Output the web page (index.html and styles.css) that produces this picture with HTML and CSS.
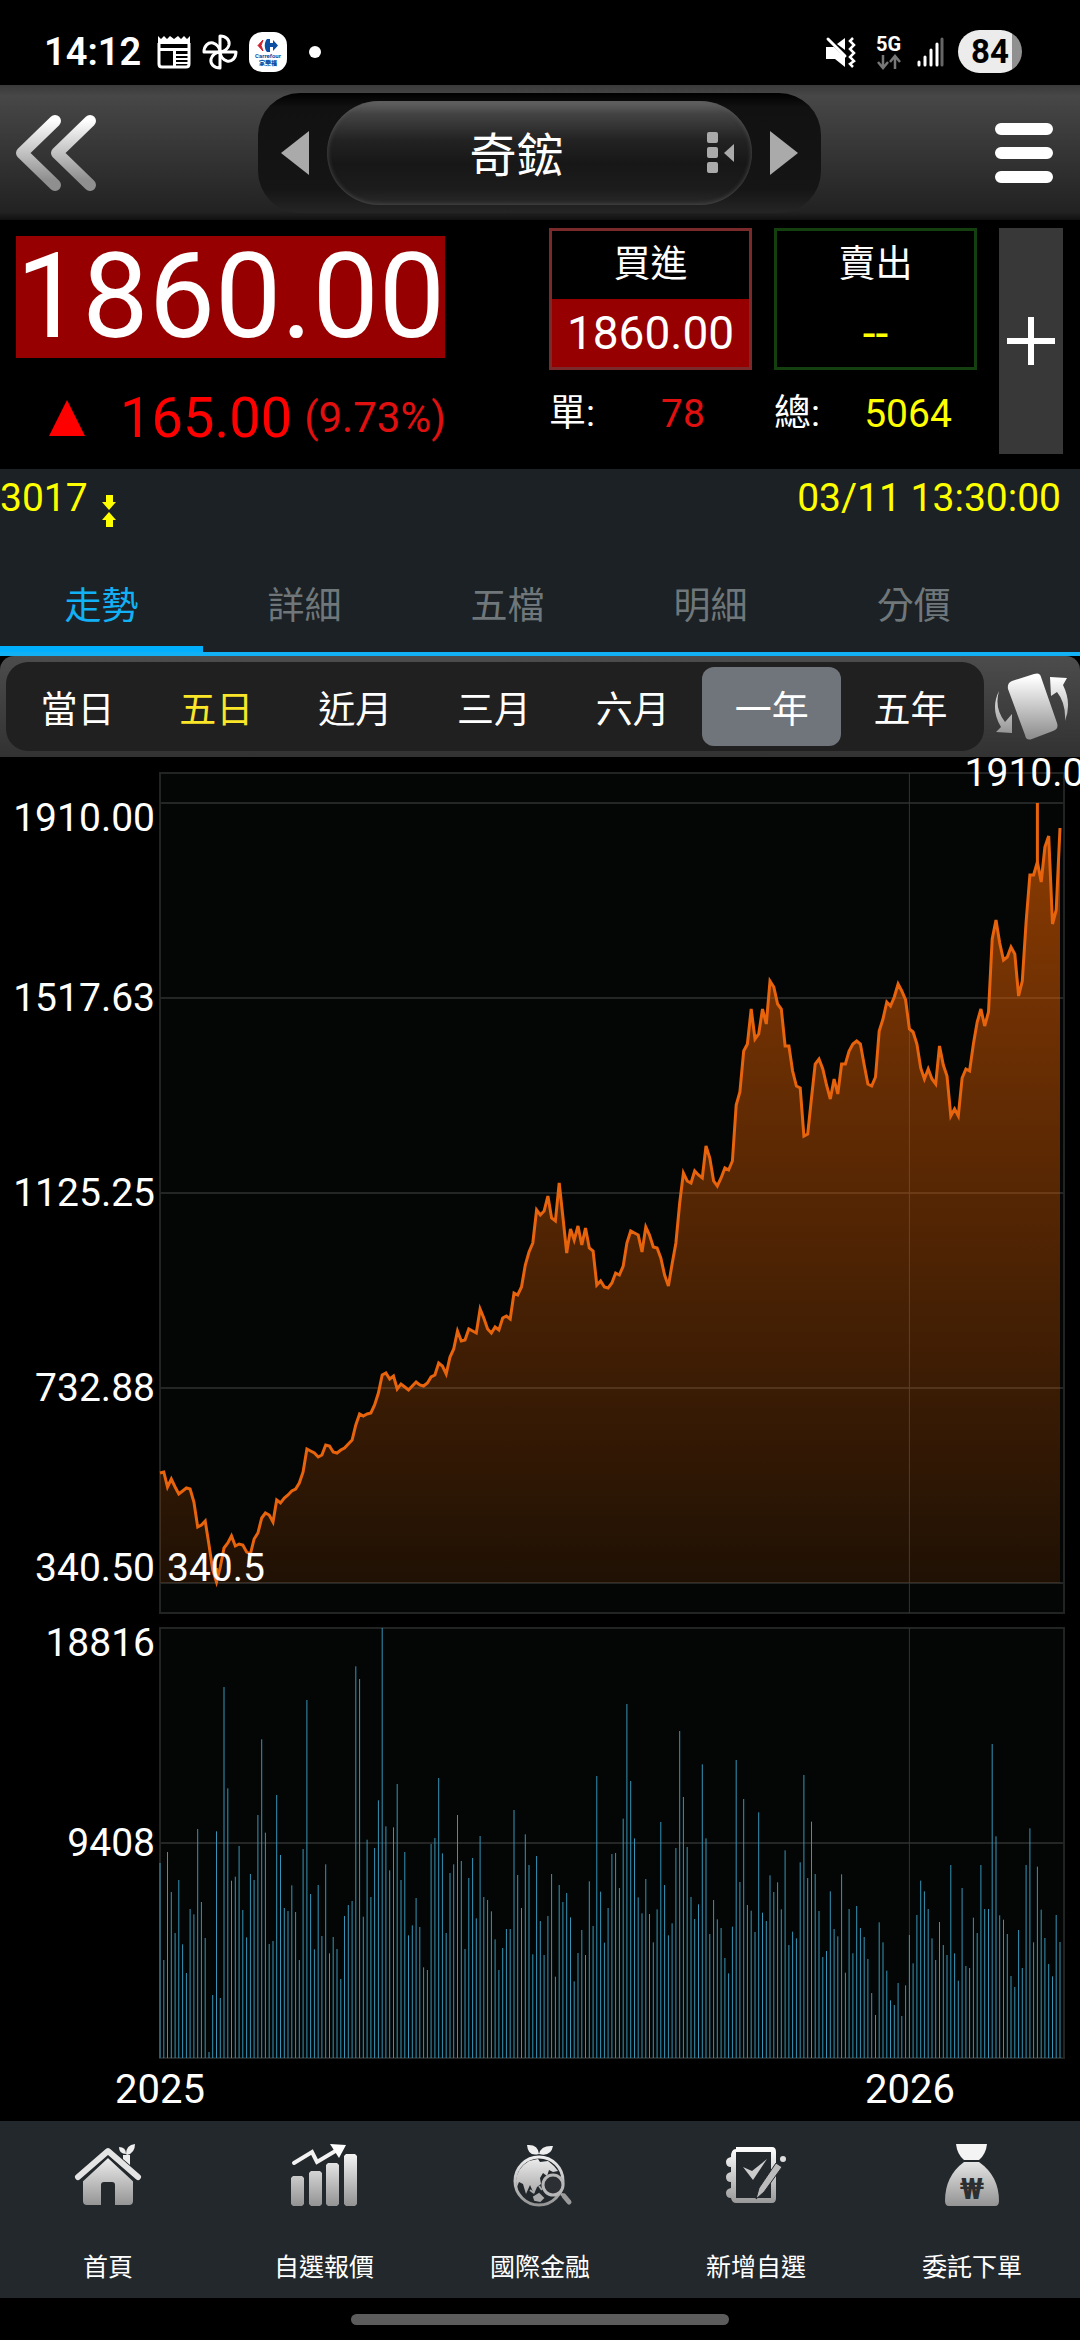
FILE: index.html
```html
<!DOCTYPE html>
<html lang="zh-Hant">
<head>
  <meta charset="UTF-8">
  <meta name="viewport" content="width=device-width, initial-scale=1.0">
  <title>奇鋐 3017</title>
  <link rel="stylesheet" href="styles.css">
</head>
<body>
  <div class="status-bar">
    <span class="clock">14:12</span>
    <svg class="status-icon" width="34" height="34" viewBox="0 0 34 34">
      <path d="M1 9V1l3 3 3-3 3 3 3-3 4 3 4-3 3 3 3-3 3 3 3-3v8z" fill="#fff"/>
      <path d="M2 8v21q0 3 3 3h24q3 0 3-3V8" fill="none" stroke="#fff" stroke-width="3"/>
      <path d="M1 13h32v3H1zM16 15h3v16h-3z" fill="#fff"/>
      <path d="M19 20h12M19 24h12M19 28h12" stroke="#fff" stroke-width="2"/>
    </svg>
    <svg class="status-icon" width="38" height="38" viewBox="0 0 38 38" fill="none" stroke="#fff" stroke-width="3" stroke-linejoin="round">
      <path d="M19 19V3c6 0 10 4 9 9-1 4-5 7-9 7"/>
      <path d="M19 19V3c6 0 10 4 9 9-1 4-5 7-9 7" transform="rotate(90 19 19)"/>
      <path d="M19 19V3c6 0 10 4 9 9-1 4-5 7-9 7" transform="rotate(180 19 19)"/>
      <path d="M19 19V3c6 0 10 4 9 9-1 4-5 7-9 7" transform="rotate(270 19 19)"/>
    </svg>
    <svg class="status-icon" width="38" height="40" viewBox="0 0 38 40">
      <rect width="38" height="40" rx="13" fill="#fff"/>
      <path d="M14 8 9 13.500l5 5.500-2-5.500z" fill="#d0202e" stroke="#d0202e"/>
      <path d="M18 7c-3 3-3 10 0 13h3v-5h3v4l5-5.500-5-5.500v3h-3V7z" fill="#0b4ea2"/>
      <text x="19" y="26" text-anchor="middle" class="logo-name">Carrefour</text>
      <text x="19" y="33" text-anchor="middle" class="logo-cjk">家樂福</text>
    </svg>
    <span class="dot"></span>
    <div class="status-right">
      <svg width="31" height="32" viewBox="0 0 31 32">
        <path d="M1 11h8L20 21v10L10 23H1zM12 8l8-6v12z" fill="#fff"/>
        <path d="M3 3 20 20" stroke="#fff" stroke-width="3" stroke-linecap="round"/>
        <path d="M28 2l-3 3 4 4-4 4 4 4-4 4 4 4-4 3 3 3" fill="none" stroke="#fff" stroke-width="2.500"/>
      </svg>
      <div class="network">
        <span>5G</span>
        <svg width="26" height="16" viewBox="0 0 26 16" fill="none" stroke="#777" stroke-width="2.500">
          <path d="M7 1v12M2 8l5 6 5-6M19 15V3M14 8l5-6 5 6"/>
        </svg>
      </div>
      <svg width="27" height="30" viewBox="0 0 27 30" stroke="#fff" stroke-width="3" stroke-linecap="round">
        <path d="M2 25v3M8 20v8M14 13v15M20 7v21"/>
        <path d="M25 2v26" stroke="#666"/>
      </svg>
      <span class="battery">84</span>
    </div>
  </div>

  <header class="top-bar">
    <button class="icon-btn" aria-label="返回">
      <svg width="84" height="82" viewBox="0 0 84 82" fill="none" stroke="url(#silver)" stroke-width="12" stroke-linecap="round" stroke-linejoin="round">
        <path d="M42 9 9 41l33 32M77 9 44 41l33 32"/>
      </svg>
    </button>
    <div class="stock-switch">
      <button class="icon-btn" aria-label="上一檔">
        <svg width="30" height="46" viewBox="0 0 30 46"><path d="M29 1v44L1 23z" fill="#aaa"/></svg>
      </button>
      <button class="stock-name">
        <span>奇鋐</span>
        <svg width="30" height="44" viewBox="0 0 30 44" fill="#aaa">
          <rect x="1" y="1" width="11" height="11" rx="2"/>
          <rect x="1" y="16" width="11" height="11" rx="2"/>
          <rect x="1" y="31" width="11" height="11" rx="2"/>
          <path d="M28 13v18l-10-9z"/>
        </svg>
      </button>
      <button class="icon-btn" aria-label="下一檔">
        <svg width="30" height="46" viewBox="0 0 30 46"><path d="M1 1v44l28-22z" fill="#aaa"/></svg>
      </button>
    </div>
    <button class="icon-btn" aria-label="選單">
      <svg width="60" height="62" viewBox="0 0 60 62" stroke="#fff" stroke-width="12" stroke-linecap="round">
        <path d="M7 7h46M7 31h46M7 55h46"/>
      </svg>
    </button>
  </header>

  <section class="quote">
    <div class="deal">
      <div class="deal-price">1860.00</div>
      <div class="change">
        <svg width="36" height="36" viewBox="0 0 36 36"><path d="M18 0l18 36H0z" fill="#f00"/></svg>
        <span class="change-value">165.00</span>
        <span class="change-rate">(9.73%)</span>
      </div>
    </div>
    <div class="side">
      <div class="order-box bid"><span>買進</span><b>1860.00</b></div>
      <div class="volume-row"><span>單:</span><b class="red">78</b></div>
    </div>
    <div class="side">
      <div class="order-box ask"><span>賣出</span><b>--</b></div>
      <div class="volume-row"><span>總:</span><b class="yellow">5064</b></div>
    </div>
    <button class="add-btn" aria-label="加入自選">
      <svg width="48" height="48" viewBox="0 0 48 48" stroke="#fff" stroke-width="6"><path d="M24 0v48M0 24h48"/></svg>
    </button>
  </section>

  <div class="code-row">
    <span>3017</span>
    <svg width="14" height="34" viewBox="0 0 14 34" fill="#ff0">
      <path d="M4 1h7v7h3l-7 8-7-8h4zM4 33h7v-7h3l-7-8-7 8h4z"/>
    </svg>
    <time>03/11 13:30:00</time>
  </div>

  <nav class="tabs">
    <button class="active">走勢</button>
    <button>詳細</button>
    <button>五檔</button>
    <button>明細</button>
    <button>分價</button>
  </nav>

  <div class="range-bar">
    <div class="ranges">
      <button>當日</button>
      <button class="hot">五日</button>
      <button>近月</button>
      <button>三月</button>
      <button>六月</button>
      <button class="active">一年</button>
      <button>五年</button>
    </div>
    <button class="icon-btn rotate" aria-label="旋轉">
      <svg width="76" height="76" viewBox="0 0 76 76">
        <path d="M18 12 40 5q6-2 7 3l16 46q2 6-4 8l-21 8q-6 2-7-4L14 20q-1-6 4-8z" fill="url(#silver)"/>
        <path d="M56 8l17 1-4 7q9 18 2 36 1-18-8-29l-6 4zM5 22q-5 17 6 31l7-8v19L2 63l5-5Q-4 40 5 22z" fill="url(#silver)"/>
      </svg>
    </button>
  </div>

  <main class="chart">
    <div class="plot price">
      <div class="scale price-scale">
        <span>1910.00</span>
        <span>1517.63</span>
        <span>1125.25</span>
        <span>732.88</span>
        <span>340.50</span>
      </div>
      <div class="canvas">
        <svg id="price" viewBox="0 0 904 840" preserveAspectRatio="none"></svg>
        <span class="mark high">1910.00</span>
        <span class="mark low">340.5</span>
      </div>
    </div>
    <div class="plot volume">
      <div class="scale volume-scale">
        <span>18816</span>
        <span>9408</span>
      </div>
      <div class="canvas">
        <svg id="volume" viewBox="0 0 904 1290" preserveAspectRatio="none"></svg>
      </div>
    </div>
    <div class="years"><span>2025</span><span>2026</span></div>
  </main>

  <nav class="bottom-nav">
    <a href="#home">
      <svg width="72" height="72" viewBox="0 0 72 72">
        <path d="M36 17l25 23v21q0 4-4 4H43V45q0-3-3-3h-8q-3 0-3 3v20H15q-4 0-4-4V40z" fill="url(#silver)"/>
        <path d="M51 15h7v10l-7-6z" fill="#eee"/>
        <path d="M8 38 36 12l28 26" fill="none" stroke="#23282c" stroke-width="9"/>
        <path d="M6 37 36 11l30 26" fill="none" stroke="#e4e4e4" stroke-width="6" stroke-linecap="round" stroke-linejoin="round"/>
        <path d="M54 14q-7 0-7-7 7 0 7 7q0-9 9-10 0 9-8 11z" fill="#eee"/>
      </svg>
      <span>首頁</span>
    </a>
    <a href="#quotes">
      <svg width="72" height="72" viewBox="0 0 72 72">
        <path d="M5 36h9l2 2v26l-2 2H5l-2-2V38zM23 31h9l2 2v31l-2 2h-9l-2-2V33zM40 23h9l2 2v39l-2 2h-9l-2-2V25zM58 14h9l2 2v48l-2 2h-9l-2-2V16z" fill="url(#silver)"/>
        <path d="M6 23l18-11 5 10 20-12" fill="none" stroke="#f2f2f2" stroke-width="4" stroke-linecap="round"/>
        <path d="M42 4l16 1-7 13z" fill="#fff"/>
      </svg>
      <span>自選報價</span>
    </a>
    <a href="#global">
      <svg width="72" height="72" viewBox="0 0 72 72">
        <circle cx="35" cy="41" r="24" fill="none" stroke="url(#silver)" stroke-width="3"/>
        <path d="M35 14Q24 17 23 5q11-1 12 9Q37 5 49 6 47 17 35 14z" fill="#eee"/>
        <path d="M12 41q1-13 13-20l9-2 2 3 8-1 6 5 4 5-5 1-4-2-2 6-4-3-3 5 1 6-4 3-3 7-4-9-4 9-3-10-4-2-2 5z" fill="url(#silver)"/>
        <path d="M30 57l5-3 4 4-3 3-5-1zM26 50l4 3M35 46l3 4" fill="#aaa" stroke="#aaa" stroke-width="2"/>
        <circle cx="49" cy="45" r="10" fill="#2c3034" stroke="#b8b8b8" stroke-width="3"/>
        <path d="M57 54l2 1" stroke="#aaa" stroke-width="3"/>
        <path d="M60 56l5 6" stroke="#9a9a9a" stroke-width="5" stroke-linecap="round"/>
      </svg>
      <span>國際金融</span>
    </a>
    <a href="#add">
      <svg width="72" height="72" viewBox="0 0 72 72">
        <path d="M16 7h36q4 0 4 5v46q0 5-4 5H16q-4 0-5-5-5 0-5-5 0-4 5-5v-6q-5 0-5-5 0-4 5-5v-5q-5 0-5-5 0-4 5-5 0-8 5-8zm0 5v46h35V12z" fill="url(#silver)" fill-rule="evenodd"/>
        <path d="M23 27l9 4 15-12-14 21z" fill="#ccc"/>
        <path d="M36 59l3-11 17-25 6 4-18 25z" fill="#bbb" stroke="#23282c" stroke-width="1"/>
        <circle cx="63" cy="19" r="3" fill="#ddd"/>
      </svg>
      <span>新增自選</span>
    </a>
    <a href="#order">
      <svg width="72" height="72" viewBox="0 0 72 72">
        <path d="M20 4h31q-1 10-8 16H28q-7-6-8-16z" fill="#f4f4f4"/>
        <path d="M28 22h15q20 14 20 39 0 5-4 5H13q-4 0-4-5 0-25 19-39z" fill="url(#silver)"/>
        <text x="36" y="59" text-anchor="middle" class="won">₩</text>
      </svg>
      <span>委託下單</span>
    </a>
  </nav>
  <div class="gesture"><span></span></div>

  <svg class="defs" width="0" height="0">
    <defs>
      <linearGradient id="silver" gradientUnits="userSpaceOnUse" x1="0" y1="8" x2="0" y2="68">
        <stop offset="0" stop-color="#fff"/>
        <stop offset="1" stop-color="#8f8f8f"/>
      </linearGradient>
    </defs>
  </svg>
  <script src="chart.js"></script>
</body>
</html>
```
FILE: styles.css
```css
* {
  box-sizing: border-box;
}
body {
  margin: 0;
  min-height: 100vh;
  display: flex;
  flex-direction: column;
  background: #000;
  color: #fff;
  font-family: Roboto, 'Noto Sans CJK TC', sans-serif;
  overflow-x: hidden;
}
svg {
  display: block;
  flex: none;
}
button {
  margin: 0;
  padding: 0;
  border: none;
  background: none;
  color: inherit;
  font: inherit;
  cursor: pointer;
}
b {
  font-weight: 400;
}
.defs {
  position: absolute;
}

/* phone status bar */
.status-bar {
  display: flex;
  align-items: center;
  height: 85px;
  padding: 18px 58px 0 44px;
}
.clock {
  font-size: 38px;
  font-weight: 600;
  margin-right: 16px;
}
.status-icon {
  margin-right: 10px;
}
.logo-name {
  font-size: 6px;
  font-weight: 700;
  fill: #0b4ea2;
}
.logo-cjk {
  font-size: 6px;
  font-weight: 900;
  fill: #0b4ea2;
}
.dot {
  width: 12px;
  height: 12px;
  margin-left: 12px;
  border-radius: 50%;
  background: #fff;
}
.status-right {
  display: flex;
  align-items: center;
  margin-left: auto;
}
.network {
  width: 26px;
  margin: 0 15px 0 20px;
  font-size: 20px;
  font-weight: 700;
  line-height: 20px;
}
.battery {
  width: 64px;
  margin-left: 14px;
  border-radius: 22px;
  background: linear-gradient(to right, #ececec 84%, #909090 84%);
  color: #000;
  font-size: 33px;
  font-weight: 700;
  line-height: 43px;
  text-align: center;
}

/* header */
.top-bar {
  display: flex;
  align-items: center;
  justify-content: space-between;
  height: 135px;
  padding: 0 26px 0 13px;
  background: linear-gradient(#3a3a3a, #474747 8%, #222 94%, #111);
}
.icon-btn {
  display: flex;
  align-items: center;
  justify-content: center;
}
.stock-switch {
  display: flex;
  align-items: center;
  justify-content: space-between;
  width: 54%;
  height: 120px;
  margin-right: 12px;
  padding: 0 22px;
  border-radius: 42px;
  background: linear-gradient(#000, #111 12%, #151515 80%, #252525);
}
.stock-name {
  display: flex;
  align-items: center;
  flex: 1;
  height: 104px;
  margin: 0 17px;
  padding-right: 16px;
  border-radius: 52px;
  background: linear-gradient(#666, #444 12%, #222 38%, #171717 60%, #1c1c1c 85%, #2a2a2a);
  box-shadow: inset 0 0 5px #555;
  font-size: 47px;
}
.stock-name span {
  flex: 1;
  padding-bottom: 2px;
}

/* quote */
.quote {
  display: flex;
  align-items: flex-start;
  gap: 22px;
  padding: 8px 17px 15px 16px;
}
.deal {
  flex: 1;
  padding-top: 8px;
}
.deal-price {
  width: 429px;
  background: #960000;
  font-size: 118px;
  line-height: 122px;
}
.change {
  display: flex;
  align-items: center;
  margin-top: 26px;
  padding-left: 33px;
  color: #f00;
}
.change-value {
  margin-left: 35px;
  font-size: 56px;
  line-height: 68px;
}
.change-rate {
  margin-left: 12px;
  padding-bottom: 2px;
  color: #e01010;
  font-size: 42px;
}
.side {
  width: 203px;
}
.order-box {
  display: flex;
  flex-direction: column;
  border: 3px solid #7a2a2a;
  font-size: 37px;
  line-height: 68px;
  text-align: center;
}
.order-box b {
  font-size: 46px;
}
.bid b {
  background: #960000;
}
.ask {
  border-color: #144010;
}
.ask b {
  color: #ff0;
}
.volume-row {
  display: flex;
  align-items: center;
  margin-top: 16px;
  font-size: 37px;
  line-height: 56px;
}
.volume-row span {
  width: 65px;
}
.volume-row b {
  flex: 1;
  font-size: 39px;
  text-align: center;
}
.red {
  color: #e01010;
}
.yellow {
  color: #ff0;
}
.add-btn {
  display: flex;
  align-items: center;
  justify-content: center;
  width: 64px;
  height: 226px;
  background: #383838;
}

/* code and time */
.code-row {
  display: flex;
  align-items: center;
  gap: 14px;
  height: 86px;
  padding: 0 19px 28px 0;
  background: #1b2124;
  color: #ff0;
  font-size: 39px;
}
.code-row svg {
  margin-top: 25px;
}
.code-row time {
  margin-left: auto;
}

/* page tabs */
.tabs {
  display: flex;
  height: 101px;
  border-bottom: 4px solid #12b0f5;
  background: #1b2124;
}
.tabs button {
  width: 18.8%;
  padding-bottom: 2px;
  color: #70777a;
  font-size: 37px;
}
.tabs .active {
  border-bottom: 6px solid #00b0ff;
  padding: 4px 0 0;
  color: #12b0f5;
}

/* time range */
.range-bar {
  display: flex;
  align-items: center;
  justify-content: space-between;
  height: 101px;
  padding: 0 10px 0 6px;
  border-radius: 14px 14px 0 0;
  background: linear-gradient(#4c4c4c, #323232);
}
.ranges {
  display: flex;
  align-items: center;
  width: 978px;
  padding: 5px 4px 5px 2px;
  border-radius: 22px;
  background: #202020;
}
.ranges button {
  flex: 1;
  height: 79px;
  border-radius: 12px;
  font-size: 37px;
}
.ranges .hot {
  color: #fae528;
}
.ranges .active {
  background: #6f757a;
}

/* charts */
.chart {
  flex: 1 1 0px;
  display: flex;
  flex-direction: column;
  padding-top: 16px;
}
.plot {
  display: grid;
  grid-template-columns: 160px 1fr;
  padding-right: 16px;
}
.price {
  flex: 840 1 0px;
  margin-bottom: 15px;
}
.volume {
  flex: 430 1 0px;
}
.scale {
  display: grid;
  padding-right: 5px;
  font-size: 39px;
  line-height: 30px;
  text-align: right;
}
.price-scale {
  grid-template-rows: 1fr 2fr 2fr 2fr 1fr;
  align-items: center;
  padding-top: 30px;
  padding-bottom: 30px;
}
.price-scale span:first-child {
  align-self: start;
}
.price-scale span:last-child {
  align-self: end;
}
.volume-scale {
  grid-template-rows: 1fr 1fr;
}
.volume-scale span + span {
  margin-top: -15px;
}
.canvas {
  position: relative;
  min-width: 0;
}
.canvas svg {
  position: absolute;
  width: 100%;
  height: 100%;
  overflow: visible;
}
.mark {
  position: absolute;
  font-size: 39px;
  line-height: 30px;
}
.high {
  left: 89%;
  top: -15px;
}
.low {
  left: 7px;
  bottom: 30px;
}
.years {
  display: grid;
  grid-template-columns: 320px 1fr 340px;
  padding: 8px 0;
  font-size: 40px;
  line-height: 47px;
  text-align: center;
}
.years span:last-child {
  grid-column: 3;
}

.frame {
  fill: #040605;
  stroke: #222423;
  stroke-width: 2;
}
.grid-line {
  fill: none;
  stroke: #242625;
  stroke-width: 2;
}
.year-line {
  stroke: #333;
  stroke-width: 1;
}
.area {
  fill: url(#heat);
}
.line {
  fill: none;
  stroke: #e8640c;
  stroke-width: 3;
}
.bar {
  stroke: #3694b8;
  stroke-width: 1;
}
.frame, .grid-line, .year-line, .line, .bar {
  vector-effect: non-scaling-stroke;
}

/* bottom menu */
.bottom-nav {
  display: flex;
  height: 177px;
  background: #23282c;
}
.bottom-nav a {
  flex: 1;
  display: flex;
  flex-direction: column;
  align-items: center;
  justify-content: space-between;
  padding: 19px 0 15px;
  color: #fff;
  font-size: 25px;
  text-decoration: none;
}
.won {
  fill: #2c2f32;
  font-size: 30px;
  font-weight: 700;
}
.gesture {
  display: flex;
  justify-content: center;
  height: 42px;
  padding-top: 16px;
}
.gesture span {
  width: 35%;
  height: 11px;
  border-radius: 6px;
  background: #5c5c5c;
}
```
FILE: chart.js
```js
// line heights, 0 = top of the price plot, 840 = bottom
const prices = [
  700, 699, 714, 706, 714, 721, 718, 715, 716, 729, 754, 752, 748, 772, 797, 809, 794, 775, 770, 763,
  773, 771, 772, 779, 781, 766, 760, 745, 740, 742, 749, 727, 730, 725, 722, 718, 716, 710, 699, 676,
  678, 680, 684, 682, 672, 673, 679, 680, 677, 675, 671, 667, 652, 641, 643, 641, 640, 632, 620, 602,
  600, 606, 603, 616, 611, 614, 617, 613, 609, 612, 613, 610, 604, 602, 590, 593, 601, 584, 576, 558,
  568, 567, 556, 558, 560, 536, 545, 556, 560, 554, 557, 545, 543, 546, 520, 522, 514, 492, 479, 470,
  437, 442, 438, 423, 445, 448, 410, 444, 480, 456, 467, 453, 472, 455, 475, 478, 512, 508, 514, 515,
  510, 500, 502, 493, 470, 458, 460, 462, 479, 454, 462, 474, 475, 485, 502, 513, 491, 470, 430, 400,
  408, 410, 398, 402, 405, 373, 385, 408, 413, 405, 395, 397, 388, 332, 319, 278, 271, 236, 266, 261,
  236, 251, 208, 214, 231, 236, 273, 273, 298, 313, 315, 363, 361, 325, 291, 286, 296, 312, 326, 306,
  321, 291, 291, 278, 271, 268, 271, 292, 311, 313, 304, 258, 246, 229, 233, 224, 211, 218, 227, 256,
  259, 271, 295, 306, 296, 306, 311, 273, 292, 303, 343, 336, 343, 305, 296, 298, 271, 249, 236, 253,
  239, 166, 147, 170, 187, 184, 174, 181, 223, 208, 149, 102, 102, 89, 109, 74, 63, 151, 137, 55
];

// bar tops, 84 = top of the volume plot, 1374 = base line
const volumes = [
  789, 1080, 756, 876, 999, 840, 1033, 1119, 927, 943, 687, 906, 1014, 1356, 1185, 694, 1194, 261, 565, 842,
  830, 738, 930, 1012, 822, 840, 645, 418, 698, 1032, 1023, 585, 765, 924, 933, 856, 936, 1080, 747, 300,
  882, 1048, 855, 1008, 793, 1060, 1011, 1047, 1137, 948, 915, 903, 199, 237, 950, 719, 891, 744, 601, 84,
  679, 811, 682, 552, 840, 756, 1006, 976, 894, 981, 1102, 1110, 732, 714, 534, 760, 999, 819, 793, 645,
  783, 1047, 834, 774, 955, 708, 891, 900, 934, 1018, 1110, 1044, 987, 987, 630, 825, 924, 703, 795, 1063,
  768, 963, 1065, 948, 822, 1130, 855, 906, 879, 952, 1144, 1059, 990, 1065, 844, 978, 528, 875, 1028, 924,
  762, 759, 864, 656, 312, 543, 715, 892, 940, 837, 942, 1027, 928, 666, 855, 1006, 970, 744, 393, 591,
  741, 891, 957, 913, 493, 715, 1002, 900, 958, 984, 1074, 1120, 980, 480, 846, 597, 915, 932, 996, 637,
  938, 963, 826, 876, 847, 928, 751, 1035, 995, 1015, 787, 525, 834, 665, 822, 933, 1071, 1053, 874, 987,
  1009, 823, 1118, 927, 1060, 918, 984, 1011, 1077, 1179, 1245, 967, 1027, 1112, 1201, 1215, 1149, 1248, 1156, 1005,
  1090, 945, 842, 874, 927, 1015, 1080, 966, 1035, 1065, 795, 1060, 1142, 864, 1098, 1104, 953, 999, 795, 927,
  927, 432, 709, 946, 959, 1002, 1128, 1161, 990, 1104, 795, 685, 1027, 800, 929, 1014, 1092, 1129, 945, 1026
];

const step = 900 / (prices.length - 1);
const x = i => (i * step).toFixed(1);
const yearX = x(199);
const line = prices.map((y, i) => x(i) + ',' + y).join(' ');

document.getElementById('price').innerHTML = `
  <linearGradient id="heat" gradientUnits="userSpaceOnUse" x1="0" y1="30" x2="0" y2="810">
    <stop offset="0" stop-color="#e86000" stop-opacity="0.6"/>
    <stop offset="1" stop-color="#e86000" stop-opacity="0.12"/>
  </linearGradient>
  <rect class="frame" width="904" height="840"/>
  <path class="grid-line" d="M0 30H904M0 225H904M0 420H904M0 615H904M0 810H904"/>
  <path class="year-line" d="M${yearX} 0V840"/>
  <polygon class="area" points="0,810 ${line} 900,810"/>
  <polyline class="line" points="${line}"/>
  <path class="line" d="M${x(233)} 30V89M${x(15)} 795V810"/>`;

document.getElementById('volume').innerHTML = `
  <rect class="frame" width="904" height="1290"/>
  <path class="grid-line" d="M0 645H904"/>
  <path class="year-line" d="M${yearX} 0V1290"/>` +
  volumes.map((y, i) => `<path class="bar" d="M${x(i)} ${y - 84}V1290"/>`).join('');
```
